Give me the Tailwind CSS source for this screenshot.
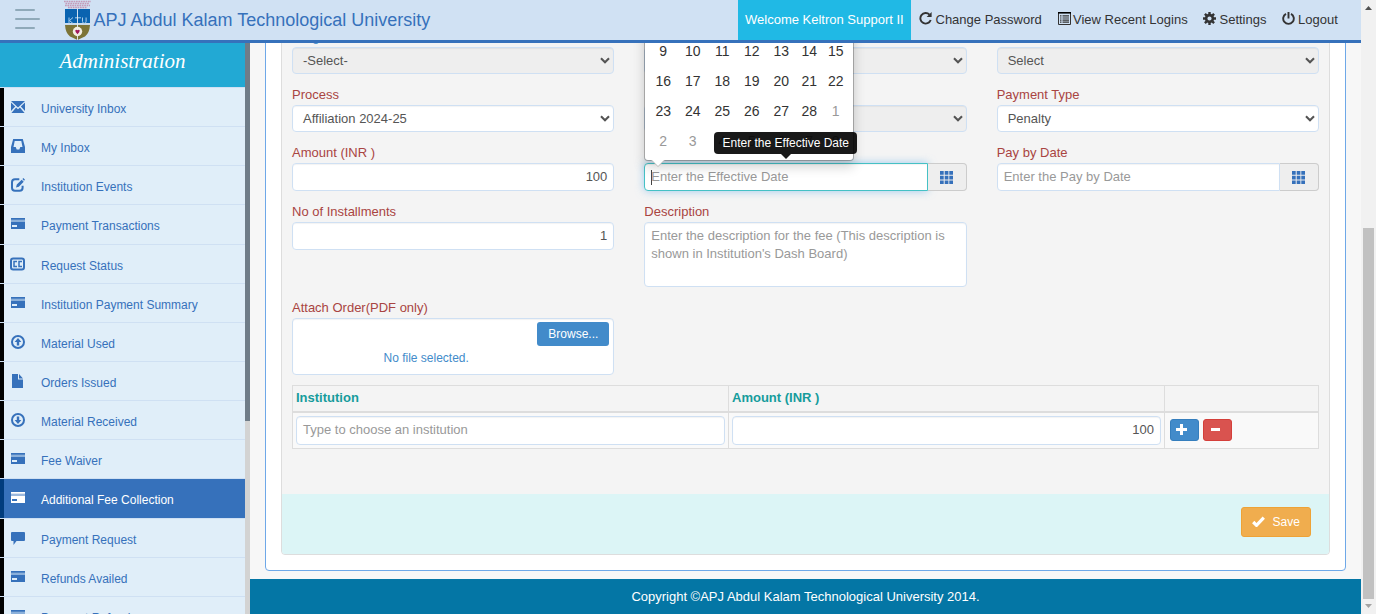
<!DOCTYPE html>
<html lang="en">
<head>
<meta charset="utf-8">
<title>APJ Abdul Kalam Technological University</title>
<script src="https://cdn.jsdelivr.net/npm/@tailwindcss/browser@4"></script>
</head>
<body class="flex h-[614px] w-[1376px] overflow-hidden bg-[#f7f7f7] font-['Liberation_Sans',Arial,sans-serif] text-[13px] leading-[18px] text-[#555]">

<svg class="hidden">
  <symbol id="i-mail" viewBox="0 0 14 14"><path d="M0 1h14L7 7.6zM0 2.6l4.2 4L0 11zM14 2.6l-4.2 4L14 11zM5.1 7.5 7 9.2l1.9-1.7L13.6 13H.4z"/></symbol>
  <symbol id="i-inbox" viewBox="0 0 14 14"><path fill-rule="evenodd" d="M2.2 0h9.6L14 8v6H0V8zM3.700 2 2.500 8h2.200l1 2.400h2.600l1-2.400h2.200l-1.200-6z"/></symbol>
  <symbol id="i-edit" viewBox="0 0 14 14"><path d="M8.3 1.3H4Q1 1.3 1 4.3v5.4q0 3 3 3h4.600q3 0 3-3V7.800" fill="none" stroke="currentColor" stroke-width="2"/><path d="M5 9.500l.8-2.900 4.900-4.900 2 2L7.800 8.700zM11.400 1l1-1L14 1.700l-1 1z"/></symbol>
  <symbol id="i-card" viewBox="0 0 14 14"><path d="M0 1h14v1.800H0z"/><path opacity=".5" d="M0 2.800h14V5H0z"/><path fill-rule="evenodd" d="M0 5h14v7H0zM1 8v2h5V8z"/></symbol>
  <symbol id="i-cc" viewBox="0 0 15 14"><rect x="1" y="1.500" width="13" height="11" rx="2.200" fill="none" stroke="currentColor" stroke-width="2"/><path d="M7 4.500H4v5h3M12 4.500H9v5h3" fill="none" stroke="currentColor" stroke-width="1.500"/></symbol>
  <symbol id="i-up" viewBox="0 0 14 14"><circle cx="7" cy="7" r="6" fill="none" stroke="currentColor" stroke-width="2"/><path d="M7 3l3.400 4H8.200v3.500H5.800V7H3.600z"/></symbol>
  <symbol id="i-down" viewBox="0 0 14 14"><circle cx="7" cy="7" r="6" fill="none" stroke="currentColor" stroke-width="2"/><path d="M7 11l3.400-4H8.200V3.500H5.800V7H3.600z"/></symbol>
  <symbol id="i-file" viewBox="0 0 14 14"><path d="M1 0h6v5.500h5V14H1zM8 0l4 4.500H8z"/></symbol>
  <symbol id="i-chat" viewBox="0 0 14 14"><path d="M1 1h12q1 0 1 1v7q0 1-1 1H5.500L2.500 14v-4H1q-1 0-1-1V2q0-1 1-1z"/></symbol>
  <symbol id="i-grid" viewBox="0 0 13 13"><path d="M0 0h3.700v3.700H0zM4.700 0h3.700v3.700H4.700zM9.300 0H13v3.700H9.300zM0 4.800h3.700v3.700H0zM4.700 4.800h3.700v3.700H4.700zM9.300 4.800H13v3.700H9.300zM0 9.600h3.700V13H0zM4.700 9.600h3.700V13H4.700zM9.300 9.600H13V13H9.300z"/></symbol>
  <symbol id="i-chev" viewBox="0 0 10 7"><path d="M1 1.200l4 4 4-4" fill="none" stroke="currentColor" stroke-width="2.100"/></symbol>
</svg>

<div class="flex w-[1361px] flex-col">
  <header class="relative z-20 flex h-[43px] shrink-0 border-b-[3px] border-[#3671bb] bg-[#d0e1f3]">
    <div class="ml-[15px] flex w-[49px] flex-col gap-[7px] pt-[9px]">
      <span class="h-[2px] w-5 rounded-full bg-[#8fa9b9]"></span>
      <span class="h-[2px] w-[25px] rounded-full bg-[#8fa9b9]"></span>
      <span class="h-[2px] w-5 rounded-full bg-[#8fa9b9]"></span>
    </div>
    <svg class="h-10 w-[27px]" viewBox="0 0 27 40">
      <path d="M0 1.500h27M1.500 3.500h24M1 5.500h25M4 7.500h19" stroke="#c39ab8" stroke-width="1.300" stroke-dasharray="1.700 .7"/>
      <path d="M1 9h25v14H1z" fill="#0a63b0"/>
      <path d="M1 25h25q-.5 8-5 11.500Q17 38 13.500 40 10 38 6 36.500 1.500 33 1 25z" fill="#7d7436"/>
      <path d="M1 23.500h25v1.500H1z" fill="#c9d9e8"/>
      <path d="M5 17.500v6M9 17.500l-3.500 3 3.500 3M11 17.800h6M18.500 17.500v4q0 1.800 1.800 1.800t1.800-1.800v-4" fill="none" stroke="#a9cdeb" stroke-width="1"/>
      <path d="M13.500 9v31" stroke="#e9eef5" stroke-width=".9"/>
      <circle cx="13.500" cy="31.500" r="4.700" fill="#f2eee4"/>
      <path d="M11.300 30.300q1-1.300 2.200 0 1.200-1.300 2.200 0 .3 2-2.200 4-2.500-2-2.200-4z" fill="#a3195b"/>
    </svg>
    <h1 class="ml-[2.500px] pt-2 text-[18px] leading-[24px] text-[#3671bb]">APJ Abdul Kalam Technological University</h1>
    <nav class="ml-auto flex h-10 text-[#333]">
      <div class="flex w-[173px] items-center bg-[#20b9e5] pl-[7px] text-white">Welcome Keltron Support II</div>
      <div class="flex w-[139px] items-center pl-2">
        <svg class="mb-[3px] mr-[3.500px] size-[13px]" viewBox="0 0 13 13"><path d="M10.500 2.600A5.300 5.300 0 1 0 11.700 8" fill="none" stroke="currentColor" stroke-width="1.900"/><path d="M12.600 0v5H7.600z" fill="currentColor"/></svg>Change Password
      </div>
      <div class="flex w-[145px] items-center pl-[7.500px]">
        <svg class="mb-[3px] mr-[2.500px] size-[13px]" viewBox="0 0 13 13"><path d="M.5.500h12v12H.5z" fill="none" stroke="currentColor"/><path d="M0 0h13v1.600H0z"/><path d="M2 3.900h1.500M4.500 3.900H11M2 6h1.500M4.500 6H11M2 8.100h1.500M4.500 8.100H11M2 10.200h1.500M4.500 10.200H11" stroke="currentColor" stroke-width="1.200"/></svg>View Recent Logins
      </div>
      <div class="flex w-[79px] items-center pl-2">
        <svg class="mb-[3px] mr-[3.500px] size-[13px]" viewBox="0 0 13 13"><circle cx="6.500" cy="6.500" r="3.400" fill="none" stroke="currentColor" stroke-width="2.600"/><path d="M6.500 0v2.500M6.500 10.500V13M0 6.500h2.500M10.500 6.500H13M1.900 1.900l1.800 1.800M9.300 9.300l1.800 1.800M11.100 1.900L9.300 3.700M3.700 9.300l-1.800 1.800" stroke="currentColor" stroke-width="2.400"/></svg>Settings
      </div>
      <div class="flex w-[87px] items-center pl-2">
        <svg class="mb-[3px] mr-[3px] size-[13px]" viewBox="0 0 13 13"><path d="M4 1.900a5.300 5.300 0 1 0 5 0M6.500 0v6.500" fill="none" stroke="currentColor" stroke-width="1.900"/></svg>Logout
      </div>
    </nav>
  </header>

  <div class="flex h-[571px]">
    <aside class="h-full w-[245px] overflow-hidden">
      <h2 class="h-11 bg-[#22a9d4] pt-[5px] text-center font-['Liberation_Serif',serif] text-[21px] leading-[26px] italic text-white">Administration</h2>
      <ul id="menu" class="text-[12px] text-[#3671bb]"></ul>
    </aside>
    <div class="w-[5px] bg-[#d3d3d3]"><div class="h-[378px] bg-[#6f7c88]"></div></div>

    <main class="relative flex w-[1111px] flex-col overflow-hidden">
      <div class="mx-[15px] -mt-5 h-[548px] shrink-0 rounded border border-[#6ea8e8] bg-white px-[15px] pb-[15px]">
        <div class="flex h-[531px] flex-col overflow-hidden rounded border border-[#ddd] bg-[#f4f4f4]">
          <div class="flex h-[470px] flex-col px-[10px] pt-[2px]">
            <div class="grid grid-cols-3 gap-x-[30px] gap-y-[11px] text-[#a94442]">
              <div class="flex flex-col gap-[2px]">
                <label class="h-[18px] pt-px text-[#428bca]">Program</label>
                <div class="flex h-[27px] items-center justify-between rounded border border-[#cfe0f3] bg-[#eee] pl-[10px] pr-[3px] text-[#555] shadow-[inset_0_1px_1px_rgba(0,0,0,0.05)]">-Select-<svg class="h-[7px] w-[10px]"><use href="#i-chev"/></svg></div>
              </div>
              <div class="flex flex-col gap-[2px]">
                <label class="h-[18px] pt-px text-[#428bca]"></label>
                <div class="flex h-[27px] items-center justify-end rounded border border-[#cfe0f3] bg-[#eee] pl-[10px] pr-[3px] text-[#555] shadow-[inset_0_1px_1px_rgba(0,0,0,0.05)]"><svg class="h-[7px] w-[10px]"><use href="#i-chev"/></svg></div>
              </div>
              <div class="flex flex-col gap-[2px]">
                <label class="h-[18px] pt-px text-[#428bca]"></label>
                <div class="flex h-[27px] items-center justify-between rounded border border-[#cfe0f3] bg-[#eee] pl-[10px] pr-[3px] text-[#555] shadow-[inset_0_1px_1px_rgba(0,0,0,0.05)]">Select<svg class="h-[7px] w-[10px]"><use href="#i-chev"/></svg></div>
              </div>

              <div class="flex flex-col gap-[2px]">
                <label class="h-[18px] pt-px">Process</label>
                <div class="flex h-[27px] items-center justify-between rounded border border-[#cfe0f3] bg-white pl-[10px] pr-[3px] text-[#555] shadow-[inset_0_1px_1px_rgba(0,0,0,0.05)]">Affiliation 2024-25<svg class="h-[7px] w-[10px]"><use href="#i-chev"/></svg></div>
              </div>
              <div class="flex flex-col gap-[2px]">
                <label class="h-[18px] pt-px"></label>
                <div class="flex h-[27px] items-center justify-end rounded border border-[#cfe0f3] bg-[#eee] pl-[10px] pr-[3px] text-[#555] shadow-[inset_0_1px_1px_rgba(0,0,0,0.05)]"><svg class="h-[7px] w-[10px]"><use href="#i-chev"/></svg></div>
              </div>
              <div class="flex flex-col gap-[2px]">
                <label class="h-[18px] pt-px">Payment Type</label>
                <div class="flex h-[27px] items-center justify-between rounded border border-[#cfe0f3] bg-white pl-[10px] pr-[3px] text-[#555] shadow-[inset_0_1px_1px_rgba(0,0,0,0.05)]">Penalty<svg class="h-[7px] w-[10px]"><use href="#i-chev"/></svg></div>
              </div>

              <div class="flex flex-col gap-[2px]">
                <label class="h-[18px] pt-px">Amount (INR )</label>
                <div class="flex h-7 items-center justify-end rounded border border-[#cfe0f3] bg-white px-[6px] text-[#555] shadow-[inset_0_1px_1px_rgba(0,0,0,0.05)]">100</div>
              </div>
              <div class="flex flex-col gap-[2px]">
                <label class="h-[18px] pt-px"></label>
                <div class="flex h-7">
                  <div class="flex flex-1 items-center border rounded-l border-[#45c1c5] bg-white pl-[6px] text-[#999] shadow-[inset_0_1px_1px_rgba(0,0,0,0.05),0_0_8px_rgba(102,175,233,0.6)]"><span class="-mr-px h-[15px] w-px bg-[#444]"></span>Enter the Effective Date</div>
                  <div class="flex w-[39px] items-center rounded-r border border-l-0 border-[#ccc] bg-[#eee] pl-3 text-[#3671bb]"><svg class="size-[13px] fill-current"><use href="#i-grid"/></svg></div>
                </div>
              </div>
              <div class="flex flex-col gap-[2px]">
                <label class="h-[18px] pt-px">Pay by Date</label>
                <div class="flex h-7">
                  <div class="flex flex-1 items-center rounded-l border border-[#cfe0f3] bg-white pl-[6px] text-[#999] shadow-[inset_0_1px_1px_rgba(0,0,0,0.05)]">Enter the Pay by Date</div>
                  <div class="flex w-[39px] items-center rounded-r border border-l-0 border-[#ccc] bg-[#eee] pl-3 text-[#3671bb]"><svg class="size-[13px] fill-current"><use href="#i-grid"/></svg></div>
                </div>
              </div>

              <div class="flex flex-col gap-[2px]">
                <label class="h-[18px] pt-px">No of Installments</label>
                <div class="flex h-7 items-center justify-end rounded border border-[#cfe0f3] bg-white px-[6px] text-[#555] shadow-[inset_0_1px_1px_rgba(0,0,0,0.05)]">1</div>
              </div>
              <div class="flex flex-col gap-[2px]">
                <label class="h-[18px] pt-px">Description</label>
                <div class="h-[65px] rounded border border-[#cfe0f3] bg-white px-[6px] pt-1 text-[#999] shadow-[inset_0_1px_1px_rgba(0,0,0,0.05)]">Enter the description for the fee (This description is shown in Institution's Dash Board)</div>
              </div>
              <div></div>

              <div class="flex flex-col gap-[2px]">
                <label class="h-[18px] pt-px">Attach Order(PDF only)</label>
                <div class="flex h-[57px] flex-col rounded border border-[#cfe0f3] bg-white pt-[3px] text-[12px] shadow-[inset_0_1px_1px_rgba(0,0,0,0.05)]">
                  <div class="mr-1 flex h-6 w-[72px] items-center justify-center self-end rounded-[3px] bg-[#428bca] text-white">Browse...</div>
                  <div class="mt-[3px] pl-[90.500px] text-[#428bca]">No file selected.</div>
                </div>
              </div>
            </div>

            <table class="mt-[10px] w-[1027px] table-fixed border-separate border-spacing-0 border-l border-t border-[#ddd]">
              <colgroup><col class="w-[436px]"><col class="w-[436px]"><col></colgroup>
              <thead>
                <tr class="text-left text-[#169c9c]">
                  <th class="h-[27px] border-b-2 border-r border-[#ddd] px-[3px] pb-[2px]">Institution</th>
                  <th class="border-b-2 border-r border-[#ddd] px-[3px] pb-[2px]">Amount (INR )</th>
                  <th class="border-b-2 border-r border-[#ddd]"></th>
                </tr>
              </thead>
              <tbody>
                <tr class="bg-[#f9f9f9]">
                  <td class="h-9 border-b border-r border-[#ddd] px-[3px]">
                    <div class="flex h-[29px] items-center rounded border border-[#cfe0f3] bg-white px-[6px] pb-px text-[#999] shadow-[inset_0_1px_1px_rgba(0,0,0,0.05)]">Type to choose an institution</div>
                  </td>
                  <td class="border-b border-r border-[#ddd] px-[3px]">
                    <div class="flex h-[29px] items-center justify-end rounded border border-[#cfe0f3] bg-white px-[6px] pb-px shadow-[inset_0_1px_1px_rgba(0,0,0,0.05)]">100</div>
                  </td>
                  <td class="border-b border-r border-[#ddd] pl-[5px]">
                    <div class="flex gap-1 pb-[2px] text-white">
                      <span class="flex h-[22px] w-[29px] items-center rounded-[3px] border border-[#357ebd] bg-[#428bca] pl-[5px]"><svg class="size-[11px]" viewBox="0 0 11 11"><path d="M0 5.500h11M5.500 0v11" stroke="currentColor" stroke-width="3"/></svg></span>
                      <span class="flex h-[22px] w-[29px] items-center rounded-[3px] border border-[#d43f3a] bg-[#d9534f] pl-[7px]"><svg class="h-[3px] w-[9px]" viewBox="0 0 9 3"><path d="M0 1.500h9" stroke="currentColor" stroke-width="3"/></svg></span>
                    </div>
                  </td>
                </tr>
              </tbody>
            </table>
          </div>
          <div class="flex h-[60px] justify-end bg-[#dcf5f6] pr-[18px] pt-[13px]">
            <div class="flex h-[30px] w-[70px] items-center rounded-[3px] border border-[#eea236] bg-[#f0ad4e] pl-[10px] text-[12px] text-white"><svg class="mb-px mr-[7.500px] h-[11px] w-[13px]" viewBox="0 0 13 11"><path d="M1.200 6l3.300 3.300L11.800 1.700" fill="none" stroke="currentColor" stroke-width="3.200"/></svg>Save</div>
          </div>
        </div>
      </div>
      <footer class="mt-2 flex flex-1 items-center justify-center bg-[#0476a5] text-white">Copyright ©APJ Abdul Kalam Technological University 2014.</footer>

      <!-- date picker popup -->
      <div class="absolute -top-10 left-[394px] h-[158px] w-[210px] rounded border border-black/25 bg-white bg-clip-padding pl-[3.500px] pt-[32px] text-[14px] text-[#333] shadow-[0_6px_12px_rgba(0,0,0,0.175)]">
        <div class="grid grid-cols-[29.500px_29.500px_29.500px_29.500px_29.500px_26.500px_26.500px] auto-rows-[30px] items-center text-center">
          <span>9</span><span>10</span><span>11</span><span>12</span><span>13</span><span>14</span><span>15</span>
          <span>16</span><span>17</span><span>18</span><span>19</span><span>20</span><span>21</span><span>22</span>
          <span>23</span><span>24</span><span>25</span><span>26</span><span>27</span><span>28</span><span class="text-[#999]">1</span>
          <span class="text-[#999]">2</span><span class="text-[#999]">3</span><span class="text-[#999]">4</span><span class="text-[#999]">5</span><span class="text-[#999]">6</span><span class="text-[#999]">7</span><span class="text-[#999]">8</span>
        </div>
        <svg class="absolute left-[6px] top-[156px] h-[7px] w-[14px]" viewBox="0 0 14 7"><path d="M0 0h14L7 7z" fill="#bbb"/><path d="M1 0h12L7 6z" fill="#fff"/></svg>
      </div>
      <!-- tooltip -->
      <div class="absolute left-[464px] top-[89px] flex h-[22px] w-[143px] items-center whitespace-nowrap rounded bg-black/90 pl-[8.500px] text-[12px] text-white">Enter the Effective Date
        <svg class="absolute left-[67px] top-[22px] h-[5px] w-[10px]" viewBox="0 0 10 5"><path d="M0 0h10L5 5z" fill-opacity=".9"/></svg>
      </div>
    </main>
  </div>
</div>

<div class="flex w-[15px] flex-col items-center bg-[#f1f1f1]">
  <svg class="mt-[6px] h-1 w-[7px]" viewBox="0 0 7 4"><path d="M0 4h7L3.500 0z" fill="#505050"/></svg>
  <div class="mt-[218px] h-[371px] w-[11px] bg-[#c1c1c1]"></div>
  <svg class="mt-[5px] h-1 w-[7px]" viewBox="0 0 7 4"><path d="M0 0h7L3.500 4z" fill="#a3a3a3"/></svg>
</div>

<script>
  const items = [
    ['University Inbox', 'mail', 39], ['My Inbox', 'inbox', 39], ['Institution Events', 'edit', 39],
    ['Payment Transactions', 'card', 40], ['Request Status', 'cc', 39], ['Institution Payment Summary', 'card', 39],
    ['Material Used', 'up', 39], ['Orders Issued', 'file', 39], ['Material Received', 'down', 39],
    ['Fee Waiver', 'card', 39], ['Additional Fee Collection', 'card', 40], ['Payment Request', 'chat', 39],
    ['Refunds Availed', 'card', 39], ['Payment Refund', 'card', 39]
  ];
  document.getElementById('menu').innerHTML = items.map(([text, icon, h]) => {
    const look = text === 'Additional Fee Collection'
      ? 'border-l-[#003c7d] bg-[#3671bb] text-white'
      : 'border-l-black bg-[#e0eef9]';
    const iconW = icon === 'cc' ? 'w-[15px] -ml-px' : 'w-[14px]';
    return `<li class="border-t border-[#cfe0f3]" style="height:${h}px"><div class="flex h-full items-start border-l-4 pl-[7px] ${look}"><svg class="mt-3 h-[14px] shrink-0 fill-current ${iconW}"><use href="#i-${icon}"/></svg><span class="ml-4 mt-3">${text}</span></div></li>`;
  }).join('');
</script>
</body>
</html>
